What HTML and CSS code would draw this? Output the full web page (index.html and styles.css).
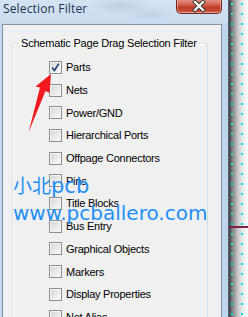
FILE: index.html
```html
<!DOCTYPE html>
<html lang="en">
<head>
<meta charset="UTF-8" />
<meta name="viewport" content="width=device-width, initial-scale=1" />
<title>Selection Filter</title>
<link rel="stylesheet" href="styles.css">
</head>
<body>

<div class="screen">
  <div class="window">
    <div class="titlebar">
      <span class="title">Selection Filter</span>
      <div class="close-btn">
        <svg width="44" height="13" viewBox="0 0 44 13">
          <path d="M18 2 L26 10 M26 2 L18 10" stroke="#3a3a3a" stroke-width="4.2" stroke-linecap="square"/>
          <path d="M18 2 L26 10 M26 2 L18 10" stroke="#fff" stroke-width="2.2" stroke-linecap="square"/>
        </svg>
      </div>
    </div>

    <div class="client">
      <fieldset class="group">
        <legend>Schematic Page Drag Selection Filter</legend>
        <ul class="options">
          <li><span class="box checked"><svg width="11" height="11" viewBox="0 0 11 11"><path d="M2.2 5.4 L4.4 8.4 L8.8 1.6" fill="none" stroke="#27467f" stroke-width="1.7"/></svg></span>Parts</li>
          <li><span class="box"></span>Nets</li>
          <li><span class="box"></span>Power/GND</li>
          <li><span class="box"></span>Hierarchical Ports</li>
          <li><span class="box"></span>Offpage Connectors</li>
          <li><span class="box"></span>Pins</li>
          <li><span class="box"></span>Title Blocks</li>
          <li><span class="box"></span>Bus Entry</li>
          <li><span class="box"></span>Graphical Objects</li>
          <li><span class="box"></span>Markers</li>
          <li><span class="box"></span>Display Properties</li>
          <li><span class="box"></span>Net Alias</li>
        </ul>
      </fieldset>
    </div>
  </div>

  <div class="desk"></div>

  <!-- annotation on top of the screenshot -->
  <svg class="arrow" width="248" height="317" viewBox="0 0 248 317">
    <polygon points="51,74 35.5,86.5 40,87.5 28.5,132.5 45.5,91 49.5,93" fill="#f2191c"/>
  </svg>

  <div class="watermark">
    <div class="wm-line wm-cn">小北<span class="wm-latin">pcb</span></div>
    <div class="wm-line">www.pcballero.com</div>
  </div>
</div>

</body>
</html>
```

FILE: styles.css
```css
* { box-sizing: border-box; margin: 0; padding: 0; }
body {
  background: #fff;
  font-family: "Liberation Sans", Arial, sans-serif;
  overflow: hidden;
}
.screen {
  position: relative;
  width: 248px;
  height: 317px;
  display: flex;
  overflow: hidden;
}

/* dialog frame */
.window {
  width: 229px;
  height: 317px;
  display: flex;
  flex-direction: column;
  background: linear-gradient(90deg, #c3d8ee 0, #c9ddf2 40%, #bfd5ec 100%);
  border-right: 1px solid #4f6075;
}
.titlebar {
  height: 24px;
  flex: none;
  display: flex;
  align-items: flex-start;
  background:
    radial-gradient(ellipse 30px 8px at 120px 6px, rgba(150,170,195,0.35), transparent),
    radial-gradient(ellipse 25px 7px at 150px 14px, rgba(160,180,200,0.3), transparent),
    linear-gradient(180deg, #d3e3f4, #cadcf0);
}
.title {
  padding: 1px 0 0 3px;
  font-family: "Open Sans", "Noto Sans", sans-serif;
  font-size: 12px;
  line-height: 16px;
  letter-spacing: 0.15px;
  color: #1c3350;
}
.close-btn {
  margin-left: auto;
  margin-right: 6px;
  width: 46px;
  height: 15px;
  margin-top: -1px;
  border: 1px solid #6e2a22;
  border-top: none;
  border-radius: 0 0 5px 5px;
  background: linear-gradient(180deg, #e6988a 0, #d66a58 35%, #bf3b2a 60%, #c44a36 85%, #d97a64 100%);
  box-shadow: inset 0 0 0 1px rgba(255,210,200,0.45);
  display: flex;
  align-items: center;
  justify-content: center;
}

/* client area */
.client {
  flex: 1;
  margin: 0 6px 0 2px;
  background: #f0f0f0;
  border: 1px solid #7f8fa2;
  border-bottom: none;
  border-top-color: #8a949f;
}
.group {
  margin: 12px 13px 0 9px;
  padding: 0;
  border: 1px solid #d5dfe5;
  border-bottom: none;
  border-radius: 3px 3px 0 0;
  box-shadow: inset 1px 1px 0 #fff;
  min-height: 300px;
}
.group legend {
  margin-left: 6px;
  padding: 0 2px;
  font-size: 11px;
  line-height: 13px;
  letter-spacing: -0.2px;
  color: #000;
}
.options {
  list-style: none;
  padding: 6px 0 0 36px;
}
.options li {
  height: 22.7px;
  display: flex;
  align-items: center;
  gap: 4px;
  font-size: 11px;
  letter-spacing: -0.25px;
  color: #000;
  white-space: nowrap;
}
.box {
  flex: none;
  width: 13px;
  height: 13px;
  border: 1px solid #8e8f8f;
  background: linear-gradient(135deg, #d2d2d2 0, #e6e6e6 45%, #fbfbfb 100%);
  box-shadow: inset 0 0 0 1px #f4f4f4;
  display: flex;
  align-items: center;
  justify-content: center;
}

/* schematic behind the dialog */
.desk {
  flex: 1;
  background:
    radial-gradient(circle, #00e0e0 0.9px, transparent 1.2px) -2px -1px / 10px 10px,
    linear-gradient(180deg, transparent 226px, #7d2244 226px, #7d2244 228px, transparent 228px),
    linear-gradient(90deg, #3e3e3e 0, #8a8a8a 4px, #c8c8c8 9px, #ececec 14px, #fafafa 19px);
}

/* overlays */
.arrow {
  position: absolute;
  left: 0;
  top: 0;
  pointer-events: none;
}
.watermark {
  position: absolute;
  left: 13px;
  top: 171px;
  color: #1f8ff8;
  font-family: "DejaVu Sans", sans-serif;
  font-size: 20px;
  line-height: 27px;
  pointer-events: none;
  white-space: nowrap;
}
.wm-cn {
  font-family: "Noto Sans CJK SC", sans-serif;
  font-size: 19px;
}
.wm-latin {
  font-family: "DejaVu Sans", sans-serif;
  font-size: 21px;
}
```
